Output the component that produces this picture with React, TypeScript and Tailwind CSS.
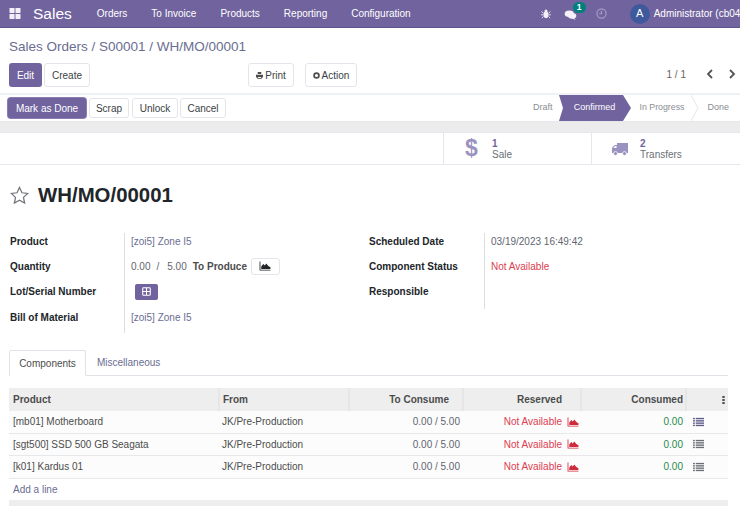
import React from "react";

const Chart = ({ className = "" }: { className?: string }) => (
  <svg viewBox="0 0 14 12" className={className} fill="currentColor">
    <path d="M0.5 0.5h1v10h12v1h-13z" />
    <path d="M2.5 9.5V6.5L5 3.5l1.8 2L8.5 3l2.500 3 2.500 1.500v2z" />
  </svg>
);

const ListIcon = ({ color }: { color: string }) => (
  <svg viewBox="0 0 12 10" className="w-[11px] h-[10px] shrink-0" style={{ color }} fill="currentColor">
    <rect x="0" y="0.5" width="2" height="1.5" />
    <rect x="3" y="0.5" width="9" height="1.5" />
    <rect x="0" y="3" width="2" height="1.5" />
    <rect x="3" y="3" width="9" height="1.5" />
    <rect x="0" y="5.5" width="2" height="1.5" />
    <rect x="3" y="5.5" width="9" height="1.5" />
    <rect x="0" y="8" width="2" height="1.5" />
    <rect x="3" y="8" width="9" height="1.5" />
  </svg>
);

const Btn = ({ children, className = "" }: { children: React.ReactNode; className?: string }) => (
  <div className={`flex items-center justify-center border border-[#e2e6ea] rounded-[3px] bg-white text-[#3a3f45] ${className}`}>
    {children}
  </div>
);

const Row = ({ children, className = "" }: { children?: React.ReactNode; className?: string }) => (
  <div className={`h-[16px] mb-[9.4px] flex items-center ${className}`}>{children}</div>
);

const rows = [
  { p: "[mb01] Motherboard", list: "#5c5a86" },
  { p: "[sgt500] SSD 500 GB Seagata", list: "#6b6f75" },
  { p: "[k01] Kardus 01", list: "#6b6f75" },
];

export default function App() {
  return (
    <div className="w-[740px] h-[514px] overflow-hidden bg-white text-[10px] text-[#4c4c4c] font-['Liberation_Sans',Arial,sans-serif]">
      {/* Navbar */}
      <div className="h-[28px] bg-[#71639e] border-b border-[#5f5488] flex items-center text-white whitespace-nowrap">
        <svg viewBox="0 0 12 12" className="w-[12px] h-[11px] ml-[9px] shrink-0" fill="#f2eff7">
          <rect x="0" y="0" width="5.5" height="5.5" rx="0.5" />
          <rect x="6.5" y="0" width="5.5" height="5.5" rx="0.5" />
          <rect x="0" y="6.5" width="5.5" height="5.5" rx="0.5" />
          <rect x="6.5" y="6.5" width="5.5" height="5.5" rx="0.5" />
        </svg>
        <span className="ml-[12px] text-[15.5px] leading-none">Sales</span>
        <div className="ml-[25px] flex gap-[24px] text-[10px]">
          <span>Orders</span>
          <span>To Invoice</span>
          <span>Products</span>
          <span>Reporting</span>
          <span>Configuration</span>
        </div>
        <svg viewBox="0 0 12 12" className="w-[10px] h-[10px] ml-[130px] shrink-0" fill="#f3f0f8">
          <ellipse cx="6" cy="7" rx="3" ry="4" />
          <circle cx="6" cy="2.5" r="1.8" />
          <path d="M0.5 3l2.5 2M11.5 3L9 5M0 7h3M12 7H9M1 11l2-2M11 11L9 9" stroke="#f3f0f8" strokeWidth="1" />
        </svg>
        <div className="relative ml-[13px] w-[13px] h-[12px] shrink-0">
          <svg viewBox="0 0 14 12" className="w-[13px] h-[10px] mt-[2px]" fill="#f3f0f8">
            <ellipse cx="5.5" cy="4.5" rx="5.5" ry="4" />
            <ellipse cx="9" cy="7" rx="5" ry="3.5" />
            <path d="M11 9l2 3-4-2z" />
          </svg>
          <span className="absolute left-[9px] top-[-6px] w-[13px] h-[11px] rounded-full bg-[#007f7f] text-[8.5px] font-bold flex items-center justify-center">1</span>
        </div>
        <svg viewBox="0 0 12 12" className="w-[11px] h-[11px] ml-[19px] shrink-0" fill="none" stroke="#a79dc4" strokeWidth="1.3">
          <circle cx="6" cy="6" r="5" />
          <path d="M6 3v3.3H3.5" />
        </svg>
        <div className="ml-[23px] w-[20px] h-[20px] rounded-full bg-[#3e5a9c] flex items-center justify-center text-[11px] shrink-0">A</div>
        <span className="ml-[4px]">Administrator (cb04)</span>
      </div>

      {/* Control panel */}
      <div className="h-[67px] border-b-2 border-[#eef1f5] flex flex-col">
        <div className="pl-[9px] pt-[10px] h-[35px] text-[13.5px] leading-[18px] text-[#6a6d92]">Sales Orders / S00001 / WH/MO/00001</div>
        <div className="flex items-start pl-[9px] pr-[4px]">
          <div className="w-[33px] h-[24px] rounded-[3px] bg-[#71639e] text-white flex items-center justify-center">Edit</div>
          <Btn className="ml-[2px] w-[46px] h-[24px]">Create</Btn>
          <Btn className="ml-[158px] w-[46px] h-[24px]">
            <svg viewBox="0 0 10 10" className="w-[7px] h-[7px] mr-[2px]" fill="#4c4c4c">
              <path d="M2.5 0h5v3h-5zM0 4h10v4H8v2H2V8H0zM3 7v2h4V7z" />
            </svg>
            Print
          </Btn>
          <Btn className="ml-[11px] w-[52px] h-[24px]">
            <svg viewBox="0 0 10 10" className="w-[7px] h-[7px] mr-[2px]">
              <circle cx="5" cy="5" r="3.5" fill="none" stroke="#4c4c4c" strokeWidth="2.4" />
            </svg>
            Action
          </Btn>
          <div className="ml-auto flex items-center h-[20px] mt-[1px]">
            <span className="text-[#6b6257]">1 / 1</span>
            <svg viewBox="0 0 8 10" className="ml-[20px] w-[8px] h-[10px]" fill="none" stroke="#555" strokeWidth="1.8">
              <path d="M6 1L2 5l4 4" />
            </svg>
            <svg viewBox="0 0 8 10" className="ml-[14px] w-[8px] h-[10px]" fill="none" stroke="#555" strokeWidth="1.8">
              <path d="M2 1l4 4-4 4" />
            </svg>
          </div>
        </div>
      </div>

      {/* Status bar */}
      <div className="h-[27px] border-b border-[#e5e7eb] flex items-center pl-[8px]">
        <div className="w-[78px] h-[20px] rounded-[3px] bg-[#71639e] text-white flex items-center justify-center shadow-[0_0_0_1px_#8a7db3]">Mark as Done</div>
        <Btn className="ml-[3px] w-[40px] h-[20px]">Scrap</Btn>
        <Btn className="ml-[3px] w-[46px] h-[20px]">Unlock</Btn>
        <Btn className="ml-[2px] w-[46px] h-[20px]">Cancel</Btn>
        <div className="ml-auto flex items-center h-[26px] text-[9px] text-[#8a8d93]">
          <span className="mr-[6px]">Draft</span>
          <div className="relative w-[72px] h-[26px] text-white flex items-center justify-center">
            <svg viewBox="0 0 72 26" className="absolute inset-0 w-full h-full" preserveAspectRatio="none">
              <path d="M0 0H64L72 13L64 26H0L4 13Z" fill="#71639e" />
            </svg>
            <span className="relative">Confirmed</span>
          </div>
          <span className="ml-[9px] text-[8.8px]">In Progress</span>
          <svg viewBox="0 0 8 26" className="ml-[7px] w-[8px] h-[26px]" fill="none" stroke="#e3e5e9">
            <path d="M0 0l7 13-7 13" />
          </svg>
          <span className="ml-[8px] mr-[11px]">Done</span>
        </div>
      </div>

      {/* Sheet gap */}
      <div className="h-[10px] bg-[#ececec]" />

      {/* Button box */}
      <div className="h-[33px] border-y border-[#e5e8ec] flex justify-end">
        <div className="w-[148px] border-l border-[#e5e8ec] flex items-center pl-[21px]">
          <span className="text-[#9a93c0] text-[23px] font-bold leading-none w-[27px]">$</span>
          <div className="flex flex-col leading-[11px]">
            <span className="font-bold text-[#71639e]">1</span>
            <span className="text-[#6b6f75]">Sale</span>
          </div>
        </div>
        <div className="w-[149px] border-l border-[#e5e8ec] flex items-center pl-[20px]">
          <svg viewBox="0 0 16 14" className="w-[16px] h-[14px]" fill="#9a93c0">
            <path d="M5 1h11v10H0V6l2.500-3H5zM1.500 6h3V4H3z" />
            <circle cx="3.500" cy="11.500" r="2" stroke="#fff" strokeWidth="0.7" />
            <circle cx="12.500" cy="11.500" r="2" stroke="#fff" strokeWidth="0.7" />
          </svg>
          <div className="ml-[12px] flex flex-col leading-[11px]">
            <span className="font-bold text-[#71639e]">2</span>
            <span className="text-[#6b6f75]">Transfers</span>
          </div>
        </div>
      </div>

      {/* Title */}
      <div className="h-[60px] flex items-center pl-[10px]">
        <svg viewBox="0 0 20 20" className="w-[19px] h-[19px]" fill="none" stroke="#6f7378" strokeWidth="1.300">
          <path d="M10 1.500l2.600 5.600 6.100.7-4.500 4.200 1.200 6L10 15l-5.400 3 1.200-6-4.500-4.200 6.100-.7z" />
        </svg>
        <h1 className="ml-[9px] text-[20.4px] font-bold text-[#212529] leading-none">WH/MO/00001</h1>
      </div>

      {/* Fields */}
      <div className="mt-[8px] h-[100px] flex items-start">
        <div className="w-[124px] pl-[10px] shrink-0 font-bold text-[#212529]">
          <Row>Product</Row>
          <Row>Quantity</Row>
          <Row>Lot/Serial Number</Row>
          <Row>Bill of Material</Row>
        </div>
        <div className="w-[245px] h-[100px] border-l border-[#dcdfe3] pl-[6px] shrink-0">
          <Row className="text-[#6a6d92]">[zoi5] Zone I5</Row>
          <Row className="text-[#5f6670]">
            <span>0.00</span>
            <span className="ml-[6px]">/</span>
            <span className="ml-[8px]">5.00</span>
            <span className="ml-[6px] font-bold text-[#4c4c4c]">To Produce</span>
            <Btn className="ml-[4px] w-[29px] h-[17px] text-[#212529]">
              <Chart className="w-[12px] h-[10px]" />
            </Btn>
          </Row>
          <Row>
            <div className="ml-[4px] w-[23px] h-[16px] rounded-[2px] bg-[#71639e] flex items-center justify-center">
              <svg viewBox="0 0 10 10" className="w-[9px] h-[9px]" fill="none" stroke="#fff" strokeWidth="1.200">
                <rect x="0.800" y="0.800" width="8.400" height="8.400" rx="1" />
                <path d="M5 1v8M1 5h8" />
              </svg>
            </div>
          </Row>
          <Row className="text-[#6a6d92]">[zoi5] Zone I5</Row>
        </div>
        <div className="w-[115px] shrink-0 font-bold text-[#212529]">
          <Row>Scheduled Date</Row>
          <Row>Component Status</Row>
          <Row>Responsible</Row>
        </div>
        <div className="h-[76px] border-l border-[#dcdfe3] pl-[6px]">
          <Row className="text-[#5f6670]">03/19/2023 16:49:42</Row>
          <Row className="text-[#dc3d50]">Not Available</Row>
        </div>
      </div>

      {/* Tabs */}
      <div className="mt-[17px] mx-[9px] w-[719px] h-[26px] border-b border-[#dfe2e6] flex">
        <div className="w-[77px] h-[26px] border border-b-white border-[#dfe2e6] rounded-t-[2px] flex items-center justify-center text-[#4c4c4c]">Components</div>
        <div className="ml-[11px] h-[25px] flex items-center text-[#6a6d92]">Miscellaneous</div>
      </div>

      {/* Table */}
      <div className="mt-[12px] mx-[9px] w-[719px]">
        <div className="h-[23px] bg-[#eeeeee] flex items-center font-bold text-[#4c4c4c]">
          <div className="w-[211px] h-full pl-[4px] flex items-center border-r-2 border-[#e6e6e6]">Product</div>
          <div className="w-[130px] h-full pl-[3px] flex items-center border-r-2 border-[#e6e6e6]">From</div>
          <div className="w-[114px] h-full pr-[13px] flex items-center justify-end border-r-2 border-[#e6e6e6]">To Consume</div>
          <div className="w-[118px] h-full pr-[18px] flex items-center justify-end border-r-2 border-[#e6e6e6]">Reserved</div>
          <div className="w-[105px] h-full pr-[2px] flex items-center justify-end border-r-2 border-[#e6e6e6]">Consumed</div>
          <div className="flex-1 h-full flex items-center justify-end pr-[3px]">
            <svg viewBox="0 0 3 10" className="w-[3px] h-[8px]" fill="#4c4c4c">
              <rect width="3" height="2.400" />
              <rect y="3.800" width="3" height="2.400" />
              <rect y="7.600" width="3" height="2.400" />
            </svg>
          </div>
        </div>
        {rows.map((r) => (
          <div key={r.p} className="h-[22.500px] bg-[#fcfcfc] border-b border-[#e6e8eb] flex items-center text-[#4c4c4c]">
            <div className="w-[211px] pl-[4px]">{r.p}</div>
            <div className="w-[130px] pl-[2px]">JK/Pre-Production</div>
            <div className="w-[114px] pr-[4px] text-right text-[#5f6670]">0.00 / 5.00</div>
            <div className="w-[118px] flex items-center justify-end pr-[3px] text-[#dc3d50]">
              Not Available
              <Chart className="ml-[5px] w-[12px] h-[10px] text-[#cf2b3c]" />
            </div>
            <div className="w-[105px] pr-[4px] text-right text-[#1f8a4c]">0.00</div>
            <div className="pl-[6px] flex items-center"><ListIcon color={r.list} /></div>
          </div>
        ))}
        <div className="h-[21px] flex items-center pl-[4px] text-[#6a6d92]">Add a line</div>
        <div className="h-[6px] bg-[#eeeeee]" />
      </div>
    </div>
  );
}
